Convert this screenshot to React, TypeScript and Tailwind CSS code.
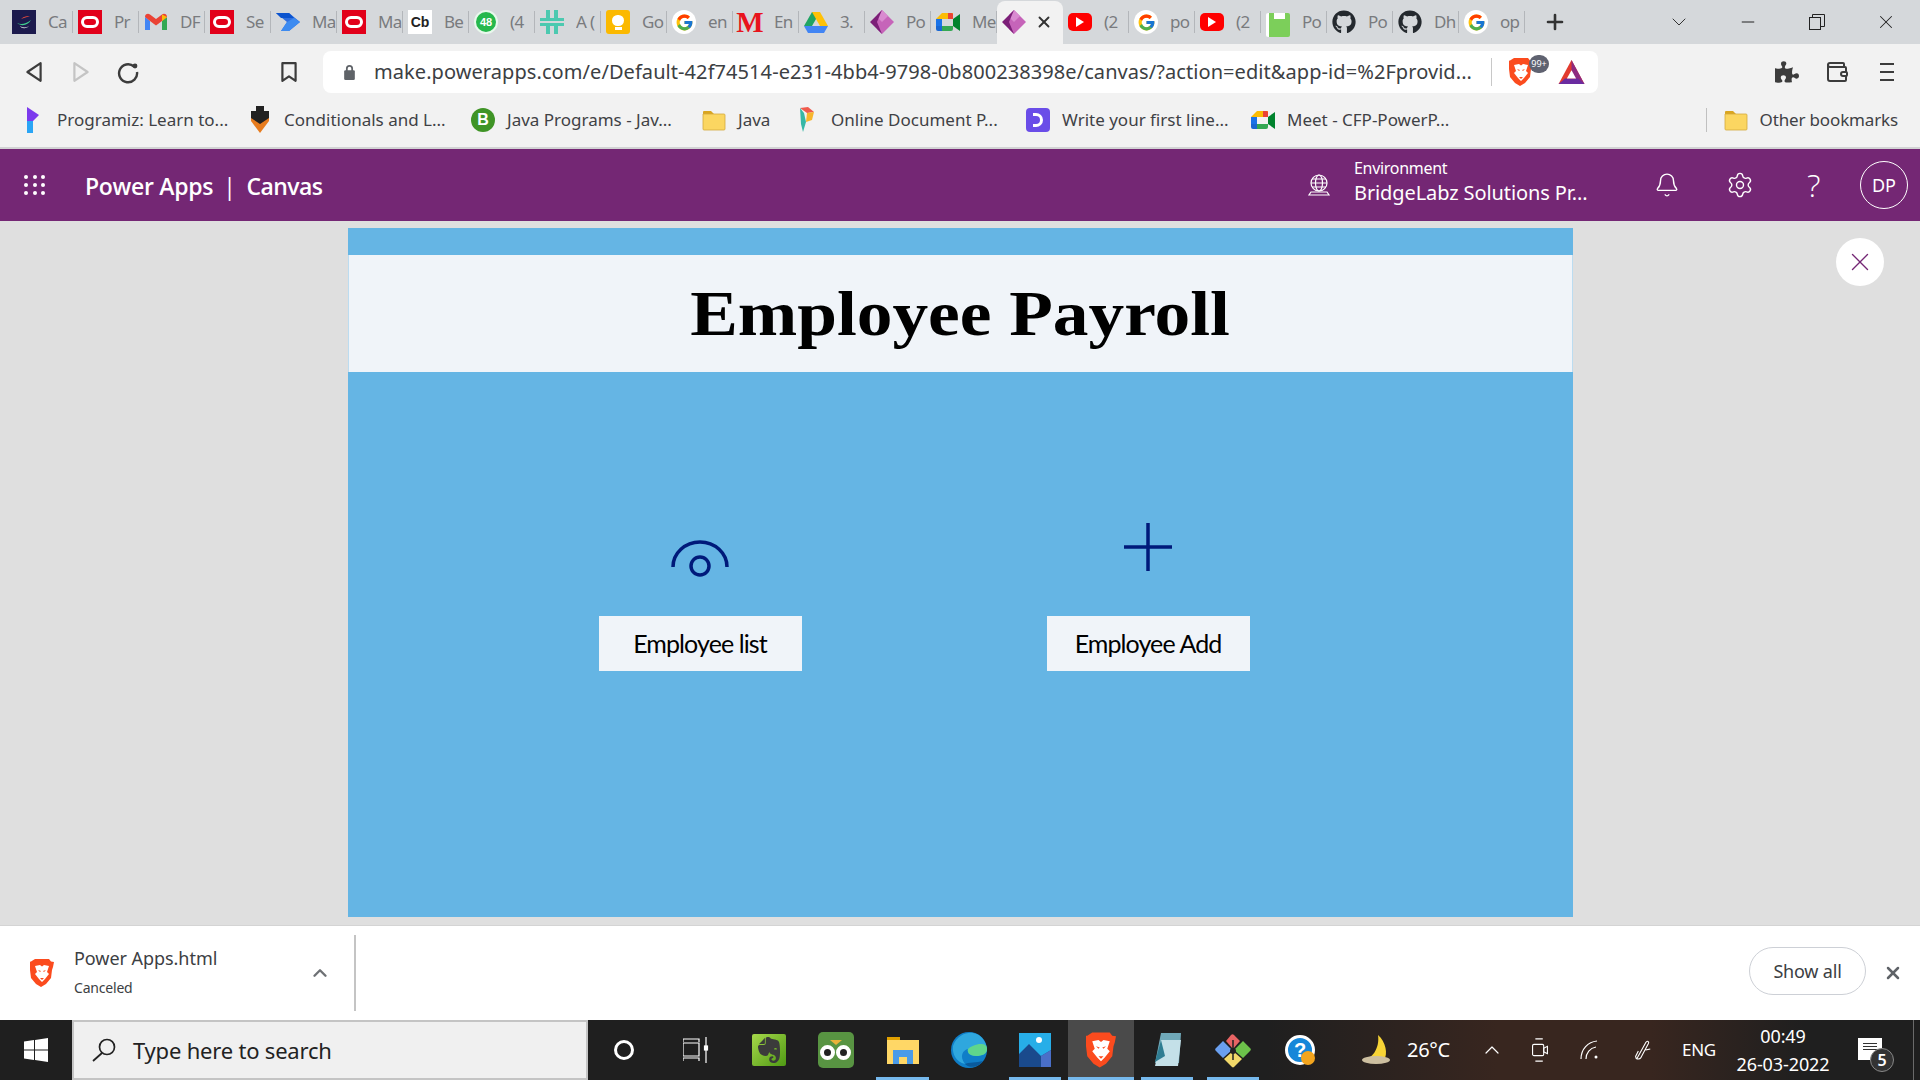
import { ReactNode } from "react";
import { FaGithub, FaPuzzlePiece } from "react-icons/fa";
import { FcGoogle } from "react-icons/fc";
import { SiEvernote } from "react-icons/si";
import { Bell, ChevronDown, ChevronUp, Minus, Plus, Settings, Wallet, X } from "lucide-react";

const Oracle = () => (
  <div className="flex h-6 w-6 items-center justify-center bg-[#e2001a]">
    <div className="h-[12px] w-[18px] rounded-[6px] border-[3px] border-white" />
  </div>
);

const Gmail = () => (
  <svg viewBox="0 0 24 24" className="h-6 w-6">
    <path d="M1 20V7l5 4v9z" fill="#4285f4" />
    <path d="M23 20V7l-5 4v9z" fill="#34a853" />
    <path d="M1 7c0-3 3-4 5-2.500L12 9l6-4.500C20 3 23 4 23 7l-5 4-6 4.500L6 11z" fill="#ea4335" />
    <path d="M18 4.500 23 7l-5 4z" fill="#fbbc04" />
  </svg>
);

const Automate = () => (
  <svg viewBox="0 0 24 24" className="h-6 w-6">
    <path d="M0 3h13l11 9-11 9H5l6-9z" fill="#2f6fe0" />
    <path d="M0 3h13l5 5H5z" fill="#0b53ce" />
    <path d="M13 21H5l6-9 7-4 6 4z" fill="#3d8bf0" />
  </svg>
);

const Whatsapp = () => (
  <div className="flex h-6 w-6 items-center justify-center rounded-full border-2 border-[#e8f8ec] bg-[#25b84c] font-['Liberation_Sans',sans-serif] text-[11px] font-bold text-white">48</div>
);

const Slack = () => (
  <svg viewBox="0 0 24 24" className="h-6 w-6" fill="#4cc9b0">
    <rect x="6" y="0" width="4" height="10" />
    <rect x="14" y="0" width="4" height="10" />
    <rect x="6" y="14" width="4" height="10" />
    <rect x="14" y="14" width="4" height="10" />
    <rect x="0" y="8" width="24" height="3" />
    <rect x="0" y="13" width="24" height="3" />
  </svg>
);

const Keep = () => (
  <div className="flex h-6 w-6 flex-col items-center justify-center rounded-[3px] bg-[#fbb900]">
    <div className="h-[11px] w-[12px] rounded-full bg-white" />
    <div className="mt-[1px] h-[3px] w-[7px] bg-white" />
  </div>
);

const Cb = () => (
  <div className="flex h-6 w-6 items-center justify-center bg-white font-['Liberation_Sans',sans-serif] text-[14px] font-bold text-[#222]">Cb</div>
);

const Google = () => (
  <div className="flex h-6 w-6 items-center justify-center rounded-full bg-white">
    <FcGoogle size={19} />
  </div>
);

const RedM = () => (
  <div className="flex h-6 w-6 items-center justify-center font-['Liberation_Serif',serif] text-[29px] leading-none font-bold text-[#e8131c]">M</div>
);

const Drive = () => (
  <svg viewBox="0 0 24 24" className="h-6 w-6">
    <path d="M8 2h8L8 16H0z" fill="#1fa463" />
    <path d="M16 2l8 14h-8L8 2z" fill="#ffc107" />
    <path d="M0 16h24l-4 7H4z" fill="#4285f4" />
  </svg>
);

const PowerApps = () => (
  <svg viewBox="0 0 24 24" className="h-6 w-6">
    <path d="M12 0l12 12-12 12-5-5V5z" fill="#c664b9" />
    <path d="M12 0l6 6-6 6-5-5z" fill="#d98ad0" />
    <path d="M12 0 0 12l12 12-5-12z" fill="#7c1f78" />
  </svg>
);

const Meet = () => (
  <svg viewBox="0 0 24 24" className="h-6 w-6">
    <path d="M6 3h11v6H0z" fill="#fbbc04" />
    <path d="M0 9h6v7H0z" fill="#1a73e8" />
    <path d="M0 16h6v5H2a2 2 0 0 1-2-2z" fill="#1967d2" />
    <path d="M6 16h11v3a2 2 0 0 1-2 2H6z" fill="#34a853" />
    <path d="M17 9v7l7 5V4z" fill="#00832d" />
    <path d="M17 4v5h-5V3h3a2 2 0 0 1 2 1z" fill="#ea4335" />
  </svg>
);

const Youtube = () => (
  <div className="flex h-6 w-6 items-center justify-center">
    <div className="flex h-[18px] w-6 items-center justify-center rounded-[5px] bg-[#ff0000]">
      <div className="h-0 w-0 border-y-[5px] border-l-[8px] border-y-transparent border-l-white" />
    </div>
  </div>
);

const Notebook = () => (
  <div className="h-6 w-6 rounded-[2px] border-l-[3px] border-white bg-[#7ccf5a]">
    <div className="mx-auto mt-[5px] h-[6px] w-[11px] bg-white" />
  </div>
);

const Github = () => <FaGithub size={24} className="text-[#24292e]" />;

const Swoosh = () => (
  <svg viewBox="0 0 24 24" className="h-6 w-6">
    <rect width="24" height="24" fill="#1c1a4d" />
    <path d="M5 13c4 2 9 1 14-3-3 5-9 7-14 3z" fill="#3fcf8e" />
    <path d="M9 9c3-3 6-3 9-3-3 1-6 2-9 3z" fill="#e0483e" />
    <path d="M8 16c3 2 6 2 9 0-3 3-7 3-9 0z" fill="#ffffff" />
  </svg>
);

const Brave = ({ className }: { className: string }) => (
  <svg viewBox="0 0 24 28" className={className}>
    <path d="M5 0h14l2 2.500 3 .5-1 5-1 3-1 8-5 6-5 3-5-3-5-6-1-8-1-3-1-5 3-.5z" fill="#fb4b1e" />
    <path d="M5 7l5-1 2 1.500L14 6l5 1-2 6 2 2-4 5-3 3-3-3-4-5 2-2z" fill="#fff" />
    <path d="M8 11l3 1-1 1zM16 11l-3 1 1 1zM10 19h4l-2 2z" fill="#fb4b1e" />
  </svg>
);

const Folder = () => (
  <svg viewBox="0 0 24 24" className="h-6 w-6">
    <path d="M1 4a1 1 0 0 1 1-1h7l3 3H1z" fill="#d9a520" />
    <path d="M1 6h21a1 1 0 0 1 1 1v14a1 1 0 0 1-1 1H2a1 1 0 0 1-1-1z" fill="#fbd661" stroke="#d4a93c" strokeWidth=".8" />
  </svg>
);

const tabs: { icon: ReactNode; title: string }[] = [
  { icon: <Swoosh />, title: "Ca" },
  { icon: <Oracle />, title: "Pr" },
  { icon: <Gmail />, title: "DF" },
  { icon: <Oracle />, title: "Se" },
  { icon: <Automate />, title: "Ma" },
  { icon: <Oracle />, title: "Ma" },
  { icon: <Cb />, title: "Be" },
  { icon: <Whatsapp />, title: "(4" },
  { icon: <Slack />, title: "A (" },
  { icon: <Keep />, title: "Go" },
  { icon: <Google />, title: "en" },
  { icon: <RedM />, title: "En" },
  { icon: <Drive />, title: "3." },
  { icon: <PowerApps />, title: "Po" },
  { icon: <Meet />, title: "Me" },
  { icon: <PowerApps />, title: "" },
  { icon: <Youtube />, title: "(2" },
  { icon: <Google />, title: "po" },
  { icon: <Youtube />, title: "(2" },
  { icon: <Notebook />, title: "Po" },
  { icon: <Github />, title: "Po" },
  { icon: <Github />, title: "Dh" },
  { icon: <Google />, title: "op" },
];

function TabStrip() {
  return (
    <div className="flex h-[44px] items-stretch bg-[#d5d8db] pl-[7px]">
      {tabs.map((tab, i) =>
        i === 15 ? (
          <div key={i} className="mt-[1px] flex w-[66px] items-center rounded-t-[8px] bg-[#f2f2f2] pb-[1px] pl-[5px]">
            {tab.icon}
            <X size={18} strokeWidth={2.5} className="ml-[9px] text-[#333]" />
          </div>
        ) : (
          <div key={i} className="flex w-[66px] items-center py-[11px] pl-[5px]">
            <div className="flex h-full w-full items-center border-r border-[#b3b6ba]">
              <div className="shrink-0">{tab.icon}</div>
              <span className="ml-[12px] w-[24px] overflow-hidden text-[17px] tracking-[-0.7px] whitespace-nowrap text-[#797b7e]">{tab.title}</span>
            </div>
          </div>
        ),
      )}
      <div className="flex w-[60px] items-center justify-center">
        <Plus size={24} strokeWidth={2.6} className="text-[#333]" />
      </div>
      <div className="ml-auto flex w-[68px] items-center justify-center">
        <ChevronDown size={24} strokeWidth={1} className="text-[#333]" />
      </div>
      <div className="flex w-[69px] items-center justify-center">
        <Minus size={20} strokeWidth={1.2} className="text-[#222]" />
      </div>
      <div className="flex w-[69px] items-center justify-center">
        <svg viewBox="0 0 16 16" className="h-4 w-4" fill="none" stroke="#222" strokeWidth="1">
          <rect x="0.500" y="3.500" width="11" height="12" />
          <path d="M3.500 3.500V.5h12v12h-4" />
        </svg>
      </div>
      <div className="flex w-[69px] items-center justify-center">
        <X size={22} strokeWidth={1.1} className="text-[#222]" />
      </div>
    </div>
  );
}

function Toolbar() {
  return (
    <div className="flex h-[56px] items-center bg-[#f2f2f2] pl-[10px] pr-[8px]">
      <div className="flex w-[48px] justify-center">
        <svg viewBox="0 0 16 20" className="h-[22px] w-[18px]" fill="none" stroke="#3c3c3c" strokeWidth="2" strokeLinejoin="round">
          <path d="M14 2v16L2 10z" />
        </svg>
      </div>
      <div className="flex w-[46px] justify-center">
        <svg viewBox="0 0 16 20" className="h-[22px] w-[18px]" fill="none" stroke="#c4c4c4" strokeWidth="2" strokeLinejoin="round">
          <path d="M2 2v16l12-8z" />
        </svg>
      </div>
      <div className="flex w-[48px] justify-center">
        <svg viewBox="0 0 24 24" className="h-6 w-6" fill="none" stroke="#3c3c3c" strokeWidth="2.400">
          <path d="M18 6.500A9 9 0 1 0 21 12" />
          <circle cx="19" cy="6" r="2.400" fill="#3c3c3c" stroke="none" />
        </svg>
      </div>
      <div className="ml-[113px] flex w-[48px] justify-center">
        <svg viewBox="0 0 16 20" className="h-[22px] w-[18px]" fill="none" stroke="#3c3c3c" strokeWidth="2" strokeLinejoin="round">
          <path d="M2 2h12v16l-6-4-6 4z" />
        </svg>
      </div>
      <div className="ml-[10px] flex h-[42px] w-[1275px] items-center rounded-[8px] bg-white pl-[20px]">
        <svg viewBox="0 0 14 18" className="h-[16px] w-[13px]" fill="#5f6368">
          <path d="M3 8V5a4 4 0 0 1 8 0v3h-2V5a2 2 0 0 0-4 0v3z" />
          <rect x="1" y="7" width="12" height="11" rx="1.500" />
        </svg>
        <span className="ml-[18px] w-[1098px] font-['Noto_Sans',sans-serif] text-[20px] tracking-[0.07px] whitespace-nowrap text-[#3c4043]">
          make.powerapps.com/e/Default-42f74514-e231-4bb4-9798-0b800238398e/canvas/?action=edit&app-id=%2Fprovid...
        </span>
        <div className="ml-[19px] h-[28px] w-[1px] bg-[#c8c8c8]" />
        <div className="relative ml-[17px] w-[24px]">
          <Brave className="h-[28px] w-[24px]" />
          <div className="absolute -top-[3px] -right-[16px] flex h-[18px] w-[20px] items-center justify-center rounded-[9px] bg-[#5f6270] text-[9px] text-white">99+</div>
        </div>
        <svg viewBox="0 0 28 26" className="ml-[25px] h-[24px] w-[27px]">
          <path d="M14 0l14 26H0z" fill="#e23b2e" />
          <path d="M14 0l14 26h-7L14 13z" fill="#8e2a7f" />
          <path d="M7 20h14l7 6H0z" fill="#6a2ba0" />
          <path d="M14 11l5 9H9z" fill="#fff" />
        </svg>
      </div>
      <div className="ml-auto flex w-[50px] justify-center">
        <FaPuzzlePiece size={24} className="text-[#3c3c3c]" />
      </div>
      <div className="flex w-[50px] justify-center">
        <Wallet size={24} strokeWidth={2} className="text-[#3c3c3c]" />
      </div>
      <div className="flex w-[50px] flex-col items-center gap-[6px]">
        <div className="h-[2px] w-[14px] bg-[#3c3c3c]" />
        <div className="h-[2px] w-[14px] bg-[#3c3c3c]" />
        <div className="h-[2px] w-[14px] bg-[#3c3c3c]" />
      </div>
    </div>
  );
}

const bookmarks: { icon: ReactNode; label: string; width: string }[] = [
  {
    icon: (
      <svg viewBox="0 0 24 28" className="h-7 w-6">
        <path d="M6 1l12 8-6 6H9v12H6z" fill="#7c3aed" />
        <path d="M6 15h6v12H6z" fill="#2aa5f5" />
      </svg>
    ),
    label: "Programiz: Learn to...",
    width: "w-[227px]",
  },
  {
    icon: (
      <svg viewBox="0 0 24 28" className="h-7 w-6">
        <path d="M3 5h18v10l-9 12-9-12z" fill="#e77c1f" />
        <path d="M3 5h18v7l-9 6-9-6zM8 0h8v5H8z" fill="#222" />
      </svg>
    ),
    label: "Conditionals and L...",
    width: "w-[223px]",
  },
  {
    icon: <div className="flex h-6 w-6 items-center justify-center rounded-full bg-[#3f9426] font-['Liberation_Sans',sans-serif] text-[16px] font-bold text-white">B</div>,
    label: "Java Programs - Jav...",
    width: "w-[231px]",
  },
  { icon: <Folder />, label: "Java", width: "w-[93px]" },
  {
    icon: (
      <svg viewBox="0 0 24 28" className="h-7 w-6">
        <path d="M5 2l8-1 6 5-7 1z" fill="#ef5a4c" />
        <path d="M12 7l7-1-2 8-6 2z" fill="#f7b52c" />
        <path d="M5 2l4 5 2 9-3 10-2-8z" fill="#37b7a5" />
      </svg>
    ),
    label: "Online Document P...",
    width: "w-[231px]",
  },
  {
    icon: (
      <div className="flex h-6 w-6 items-center justify-center rounded-[4px] bg-[#6a4de8]">
        <div className="h-[14px] w-[10px] rounded-r-full border-[3px] border-l-0 border-white" />
      </div>
    ),
    label: "Write your first line...",
    width: "w-[225px]",
  },
  { icon: <Meet />, label: "Meet - CFP-PowerP...", width: "" },
];

function BookmarksBar() {
  return (
    <div className="flex h-[49px] items-center border-b-2 border-[#d2d3d4] bg-[#f2f2f2] pb-[7px] pl-[21px] pr-[22px] font-['Noto_Sans',sans-serif] text-[17px] text-[#3f4145]">
      {bookmarks.map((b) => (
        <div key={b.label} className={`flex items-center gap-[12px] ${b.width}`}>
          <div className="flex w-6 justify-center">{b.icon}</div>
          <span className="whitespace-nowrap">{b.label}</span>
        </div>
      ))}
      <div className="ml-auto h-[24px] w-[1px] bg-[#c0c0c0]" />
      <div className="ml-[17px] flex items-center gap-[12px]">
        <Folder />
        <span className="tracking-[-0.15px] whitespace-nowrap">Other bookmarks</span>
      </div>
    </div>
  );
}

function PowerAppsHeader() {
  return (
    <div className="flex h-[72px] items-center bg-[#742774] pl-[24px] text-white">
      <div className="grid w-[22px] grid-cols-3 gap-[4px]">
        {Array.from({ length: 9 }).map((_, i) => (
          <div key={i} className="h-[4px] w-[4px] rounded-full bg-white" />
        ))}
      </div>
      <div className="mt-[2px] ml-[39px] flex items-center font-['Open_Sans',sans-serif] text-[23px] font-semibold tracking-[-0.3px]">
        <span>Power Apps</span>
        <span className="ml-[10px] font-normal">|</span>
        <span className="ml-[11px] tracking-[-0.6px]">Canvas</span>
      </div>
      <svg viewBox="0 0 24 24" className="ml-auto h-6 w-6" fill="none" stroke="#fff" strokeWidth="1.200">
        <circle cx="12" cy="10" r="8" />
        <ellipse cx="12" cy="10" rx="3.500" ry="8" />
        <path d="M4 10h16M5 6h14M5 14h14M4 19h16l2 3H2z" />
      </svg>
      <div className="mb-[6px] ml-[23px] w-[256px] font-['Noto_Sans',sans-serif]">
        <div className="text-[16px] leading-[22px] tracking-[-0.3px]">Environment</div>
        <div className="text-[20px] leading-[28px] tracking-[-0.1px] whitespace-nowrap">BridgeLabz Solutions Pr...</div>
      </div>
      <Bell size={26} strokeWidth={1.3} className="ml-[44px]" />
      <Settings size={28} strokeWidth={1.2} className="ml-[46px]" />
      <span className="ml-[53px] w-[16px] font-['Open_Sans',sans-serif] text-[32px] font-light">?</span>
      <div className="mr-[12px] ml-[37px] flex h-[48px] w-[48px] items-center justify-center rounded-full border border-white font-['Noto_Sans',sans-serif] text-[18px]">DP</div>
    </div>
  );
}

function CanvasApp() {
  return (
    <div className="flex h-[689px] w-[1225px] flex-col bg-[#65b5e4]">
      <div className="mt-[27px] flex h-[117px] items-center justify-center border-x border-[#bcdcf0] bg-[#f0f4f9]">
        <h1 className="scale-x-[1.115] font-['Liberation_Serif',serif] text-[64px] font-bold text-black">Employee Payroll</h1>
      </div>
      <div className="flex gap-[245px] pt-[148px] pl-[251px]">
        <div className="flex w-[203px] flex-col items-center">
          <svg viewBox="0 0 60 96" className="h-[96px] w-[60px]" fill="none" stroke="#001a7a" strokeWidth="3.500">
            <path d="M3 47a27 25 0 0 1 54 0" />
            <circle cx="30" cy="46" r="9" />
          </svg>
          <button className="h-[55px] w-[203px] bg-[#f0f4f9] font-['Lato',sans-serif] text-[25px] tracking-[-0.9px] text-black">Employee list</button>
        </div>
        <div className="flex w-[203px] flex-col items-center">
          <svg viewBox="0 0 60 96" className="h-[96px] w-[60px]" fill="none" stroke="#001a7a" strokeWidth="3.500">
            <path d="M30 3v48M6 27h48" />
          </svg>
          <button className="h-[55px] w-[203px] bg-[#f0f4f9] font-['Lato',sans-serif] text-[25px] tracking-[-0.9px] text-black">Employee Add</button>
        </div>
      </div>
    </div>
  );
}

function DownloadShelf() {
  return (
    <div className="flex h-[95px] items-center border-t border-[#d4d4d4] bg-white pl-[30px]">
      <Brave className="h-[30px] w-[24px]" />
      <div className="mb-[4px] ml-[20px] w-[235px] font-['Noto_Sans',sans-serif] text-[#3c4043]">
        <div className="text-[18px] leading-[26px] tracking-[-0.05px]">Power Apps.html</div>
        <div className="mt-[8px] text-[14px] leading-[18px] tracking-[-0.2px]">Canceled</div>
      </div>
      <ChevronUp size={22} strokeWidth={2.6} className="text-[#6e7175]" />
      <div className="ml-[23px] h-[76px] w-[2px] bg-[#c4c4c4]" />
      <button className="mb-[4px] ml-auto h-[48px] w-[117px] rounded-full border border-[#cdd0d6] font-['Noto_Sans',sans-serif] text-[18px] tracking-[-0.2px] text-[#3c4043]">Show all</button>
      <X size={20} strokeWidth={3} className="mr-[17px] ml-[17px] text-[#5f6368]" />
    </div>
  );
}

const TaskSlot = ({ width, active, running, children }: { width: string; active?: boolean; running?: boolean; children: ReactNode }) => (
  <div className={`relative flex h-full items-center justify-center ${width} ${active ? "bg-[#4a4a4a]" : ""}`}>
    {children}
    {running && <div className={`absolute bottom-0 h-[3px] bg-[#76b9ed] ${active ? "inset-x-0" : "inset-x-[7px]"}`} />}
  </div>
);

function Taskbar() {
  return (
    <div className="flex h-[60px] items-center bg-[linear-gradient(90deg,#1f1f1f_0%,#1f1f1f_66%,#38261f_78%,#38261f_86%,#1f1f1f_94%)] text-white">
      <div className="flex w-[72px] justify-center">
        <svg viewBox="0 0 24 24" className="h-6 w-6" fill="#fff">
          <path d="M0 3.500l10-1.500v9.500H0zM11 2l13-2v11.500H11zM0 12.500h10V22L0 20.500zM11 12.500h13V24l-13-2z" />
        </svg>
      </div>
      <div className="flex h-full w-[516px] items-center border-2 border-[#c4c4c4] bg-[#f0f0f0] pl-[18px] font-['Noto_Sans',sans-serif] text-[22px] tracking-[-0.2px] text-[#222]">
        <svg viewBox="0 0 24 24" className="h-6 w-6" fill="none" stroke="#222" strokeWidth="1.700">
          <circle cx="15" cy="9" r="7.500" />
          <path d="M10 15 1 23" />
        </svg>
        <span className="ml-[17px]">Type here to search</span>
      </div>
      <div className="flex h-full w-[72px] items-center justify-center">
        <div className="h-[20px] w-[20px] rounded-full border-[3px] border-white" />
      </div>
      <TaskSlot width="w-[72px]">
        <svg viewBox="0 0 26 26" className="h-[26px] w-[26px]" fill="none" stroke="#fff" strokeWidth="1.200">
          <path d="M0 5V2h16v3M0 6h16v13H0zM0 24v-3h16v3M23 0v26" />
          <rect x="21.500" y="9" width="3" height="4" fill="#fff" />
        </svg>
      </TaskSlot>
      <div className="w-[4px]" />
      <TaskSlot width="w-[66px]">
        <div className="flex h-[32px] w-[34px] items-center justify-center rounded-[2px] bg-[linear-gradient(135deg,#a6d84a,#4f9a14)]">
          <SiEvernote size={26} className="text-[#3b3b3b]" />
        </div>
      </TaskSlot>
      <TaskSlot width="w-[67px]">
        <div className="flex h-[36px] w-[36px] flex-col items-center justify-center rounded-[5px] bg-[#589442]">
          <div className="h-0 w-0 border-x-[6px] border-t-[5px] border-x-transparent border-t-[#e8b23a]" />
          <div className="flex gap-[1px]">
            <div className="h-[15px] w-[15px] rounded-full border-[4px] border-white bg-[#222]" />
            <div className="h-[15px] w-[15px] rounded-full border-[4px] border-white bg-[#222]" />
          </div>
        </div>
      </TaskSlot>
      <TaskSlot width="w-[67px]" running>
        <svg viewBox="0 0 32 32" className="h-[32px] w-[32px]">
          <path d="M0 3h13v4H0z" fill="#e0a000" />
          <path d="M0 6h32v24H0z" fill="#ffd766" />
          <path d="M6 16h20v14h-6v-7h-8v7H6z" fill="#4a9be8" />
        </svg>
      </TaskSlot>
      <TaskSlot width="w-[66px]">
        <svg viewBox="0 0 36 36" className="h-[36px] w-[36px]">
          <circle cx="18" cy="18" r="18" fill="#0f7ec8" />
          <path d="M2 14C6 3 16 0 22 1c8 1 13 8 14 16 0 5-5 7-11 7-7 0-9-4-8-7-5 1-9 7-3 15-9-2-13-10-12-18z" fill="#2fa7de" />
          <path d="M36 17c0 5-5 7-11 7-7 0-9-4-8-7 3-4 19-9 19 0z" fill="#5fd68c" />
          <path d="M14 32c5 5 14 3 18-3-6 2-15 1-18 3z" fill="#0a5a9c" />
        </svg>
      </TaskSlot>
      <TaskSlot width="w-[66px]" running>
        <svg viewBox="0 0 32 36" className="h-[36px] w-[32px]">
          <path d="M0 1h32v34H0z" fill="#27aee8" />
          <path d="M0 35V22l10-10 12 12 10-6v17z" fill="#1a4a8c" />
          <path d="M22 24l10-6v17H22z" fill="#4a6fc8" />
          <circle cx="20" cy="8" r="3" fill="#fff" />
        </svg>
      </TaskSlot>
      <TaskSlot width="w-[66px]" active running>
        <Brave className="h-[36px] w-[30px]" />
      </TaskSlot>
      <TaskSlot width="w-[66px]" running>
        <svg viewBox="0 0 32 36" className="h-[36px] w-[32px]">
          <path d="M10 1h20l-2 30H4z" fill="#6fa8b8" />
          <path d="M10 8h20l-3 26H4z" fill="#c4e0e8" />
          <path d="M10 8 4 30l10-6z" fill="#2f7d92" />
        </svg>
      </TaskSlot>
      <TaskSlot width="w-[66px]" running>
        <svg viewBox="0 0 36 36" className="h-[36px] w-[36px]">
          <path d="M18 17 11 9l5-6a2 2 0 0 1 3 0l6 6z" fill="#e86464" />
          <path d="M17 18 8 9 1 16a2 2 0 0 0 0 3l7 7z" fill="#6aa0f0" />
          <path d="M19 18l9-9 7 7a2 2 0 0 1 0 3l-7 7z" fill="#6cc24a" />
          <path d="M18 19l-9 8 8 8a1.500 1.500 0 0 0 2 0l8-8z" fill="#f2d96a" />
          <circle cx="18" cy="19" r="3" fill="#222" />
          <path d="M18 8v20" stroke="#222" strokeWidth="1.500" />
        </svg>
      </TaskSlot>
      <div className="ml-[21px] flex h-[26px] w-[26px] items-center justify-center">
        <div className="relative flex h-[30px] w-[30px] shrink-0 items-center justify-center rounded-full border-[3px] border-white bg-[#1687d9] font-['Liberation_Sans',sans-serif] text-[20px] font-bold">
          ?
          <div className="absolute -right-[3px] -bottom-[3px] h-[14px] w-[14px] rounded-full bg-[#f3a51e]" />
        </div>
      </div>
      <div className="ml-[45px] flex h-[32px] w-[36px] items-center justify-center">
        <svg viewBox="0 0 36 32" className="h-[32px] w-[36px]">
          <path d="M20 1C28 8 30 20 26 26H4C14 26 22 14 20 1z" fill="#f7d436" />
          <ellipse cx="18" cy="26" rx="14" ry="4" fill="#cdbfa0" />
        </svg>
      </div>
      <span className="ml-[13px] w-[44px] font-['Noto_Sans',sans-serif] text-[20px] tracking-[-0.3px] whitespace-nowrap">26°C</span>
      <ChevronUp size={24} strokeWidth={1.2} className="ml-[29px]" />
      <svg viewBox="0 0 20 28" className="ml-[26px] h-[26px] w-[20px]" fill="none" stroke="#fff" strokeWidth="1.200">
        <rect x="2" y="8" width="12" height="12" rx="1.500" />
        <path d="M14 12l4-2v8l-4-2zM5 2h8M5 26h8" />
      </svg>
      <svg viewBox="0 0 20 20" className="ml-[30px] h-[20px] w-[20px]" fill="none" stroke="#fff" strokeWidth="1.200">
        <path d="M1 19C1 9 8 2 17 1M6 19c0-6 4-11 10-12" />
        <circle cx="16" cy="17" r="1.500" fill="#fff" stroke="none" />
      </svg>
      <svg viewBox="0 0 20 24" className="ml-[32px] h-[22px] w-[20px]" fill="none" stroke="#fff" strokeWidth="1.200">
        <path d="M4 22 14 4c2-3 4-1 3 1L9 20c-2 3-6 2-6-1l3-6M14 12l5-1" />
      </svg>
      <span className="ml-[30px] w-[34px] font-['Noto_Sans',sans-serif] text-[17px] tracking-[-0.3px]">ENG</span>
      <div className="ml-[16px] w-[102px] text-center font-['Noto_Sans',sans-serif] text-[18px] leading-[28px] tracking-[-0.1px] whitespace-nowrap">
        <div>00:49</div>
        <div>26-03-2022</div>
      </div>
      <div className="relative ml-[24px] mb-[3px] h-[22px] w-[24px] bg-white">
        <div className="mx-auto mt-[5px] flex w-[14px] flex-col gap-[2px]">
          <div className="h-[1px] bg-[#333]" />
          <div className="h-[1px] bg-[#333]" />
          <div className="h-[1px] bg-[#333]" />
        </div>
        <div className="absolute top-[10px] left-[12px] flex h-[24px] w-[24px] items-center justify-center rounded-full border border-[#888] bg-[#333] font-['Noto_Sans',sans-serif] text-[16px] font-semibold">5</div>
      </div>
      <div className="mr-[6px] ml-auto h-full w-[1px] bg-[#6a6a6a]" />
    </div>
  );
}

export default function App() {
  return (
    <div className="flex h-screen w-[1920px] flex-col overflow-hidden font-['Noto_Sans',sans-serif]">
      <TabStrip />
      <Toolbar />
      <BookmarksBar />
      <PowerAppsHeader />
      <div className="relative flex flex-1 justify-center bg-[#dfdfdf] pt-[7px]">
        <CanvasApp />
        <button className="absolute top-[17px] right-[36px] flex h-[48px] w-[48px] items-center justify-center rounded-full bg-white">
          <X size={30} strokeWidth={1.1} className="text-[#742774]" />
        </button>
      </div>
      <DownloadShelf />
      <Taskbar />
    </div>
  );
}
